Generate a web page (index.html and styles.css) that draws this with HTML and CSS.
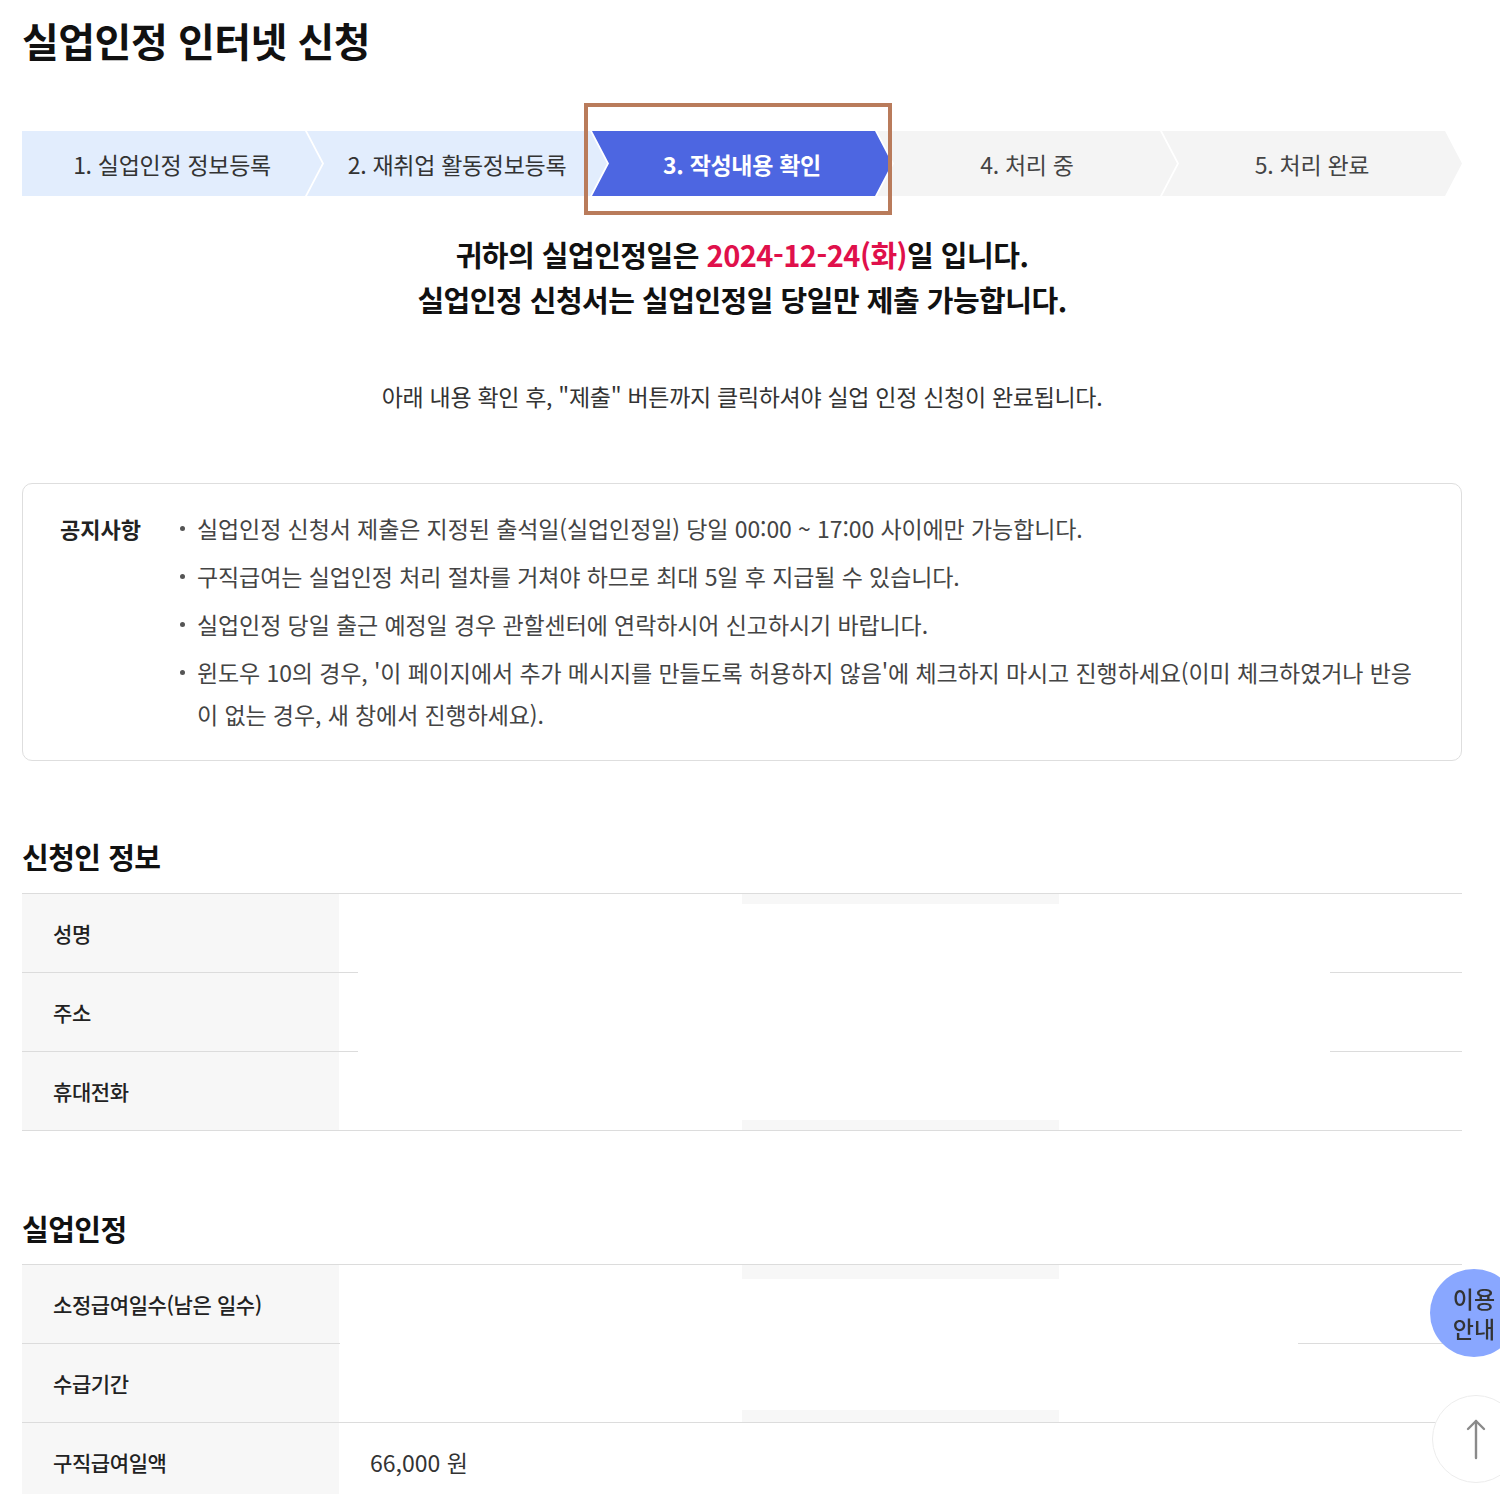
FILE: index.html
```html
<!DOCTYPE html>
<html lang="ko">
<head>
    <meta charset="utf-8">
    <title>실업인정 인터넷 신청</title>
    <link rel="stylesheet" href="styles.css">
</head>
<body>
    <div class="wrap">
        <h1 class="page-title">실업인정 인터넷 신청</h1>

        <div class="steps">
            <div class="step step-done step-first">1. 실업인정 정보등록</div>
            <div class="step step-done">2. 재취업 활동정보등록</div>
            <div class="step step-on">3. 작성내용 확인</div>
            <div class="step">4. 처리 중</div>
            <div class="step">5. 처리 완료</div>
            <div class="step-mark"></div>
        </div>

        <div class="message">
            <p>귀하의 실업인정일은 <span class="date">2024-12-24(화)</span>일 입니다.</p>
            <p>실업인정 신청서는 실업인정일 당일만 제출 가능합니다.</p>
        </div>

        <p class="guide">아래 내용 확인 후, "제출" 버튼까지 클릭하셔야 실업 인정 신청이 완료됩니다.</p>

        <div class="notice">
            <strong class="notice-title">공지사항</strong>
            <ul class="notice-list">
                <li>실업인정 신청서 제출은 지정된 출석일(실업인정일) 당일 00:00 ~ 17:00 사이에만 가능합니다.</li>
                <li>구직급여는 실업인정 처리 절차를 거쳐야 하므로 최대 5일 후 지급될 수 있습니다.</li>
                <li>실업인정 당일 출근 예정일 경우 관할센터에 연락하시어 신고하시기 바랍니다.</li>
                <li>윈도우 10의 경우, '이 페이지에서 추가 메시지를 만들도록 허용하지 않음'에 체크하지 마시고 진행하세요(이미 체크하였거나 반응<br>이 없는 경우, 새 창에서 진행하세요).</li>
            </ul>
        </div>

        <h2 class="sec-title">신청인 정보</h2>
        <div class="info-table">
            <div class="row"><div class="th">성명</div><div class="td"></div></div>
            <div class="row"><div class="th">주소</div><div class="td"></div></div>
            <div class="row"><div class="th">휴대전화</div><div class="td"></div></div>
            <div class="mask mask-a"><span class="mask-top"></span><span class="mask-bottom"></span></div>
        </div>

        <h2 class="sec-title sec-second">실업인정</h2>
        <div class="info-table">
            <div class="row"><div class="th">소정급여일수(남은 일수)</div><div class="td"></div></div>
            <div class="row"><div class="th">수급기간</div><div class="td"></div></div>
            <div class="row"><div class="th">구직급여일액</div><div class="td">66,000 원</div></div>
            <div class="mask mask-b"><span class="mask-top"></span><span class="mask-bottom"></span></div>
        </div>
    </div>

    <a class="float-btn btn-guide" href="#">이용<br>안내</a>
    <a class="float-btn btn-top" href="#">
        <svg width="24" height="42" viewBox="0 0 24 42" fill="none" stroke="#8a8a8a" stroke-width="2.4" stroke-linecap="round" stroke-linejoin="round">
            <path d="M12 3 L12 40"/>
            <path d="M4 11 L12 3 L20 11"/>
        </svg>
    </a>
</body>
</html>
```

FILE: styles.css
```css
body {
    margin: 0;
    background-color: #fff;
    color: #111;
    font-family: "Noto Sans CJK KR", "Noto Sans", sans-serif;
}
.wrap {
    width: 1440px;
    margin-left: 22px;
    padding-bottom: 40px;
}
.page-title {
    margin: 0;
    padding-top: 16px;
    font-size: 40px;
    line-height: 48px;
    font-weight: 700;
    letter-spacing: -0.5px;
}

/* 진행 단계 */
.steps {
    position: relative;
    display: flex;
    margin-top: 67px;
    height: 65px;
}
.step {
    flex: 0 0 300px;
    margin-left: -15px;
    display: flex;
    align-items: center;
    justify-content: center;
    background-color: #f4f4f4;
    color: #444;
    font-size: 23px;
    letter-spacing: -0.3px;
    clip-path: polygon(0 0, calc(100% - 17px) 0, 100% 50%, calc(100% - 17px) 100%, 0 100%, 17px 50%);
}
.step-first {
    margin-left: 0;
    clip-path: polygon(0 0, calc(100% - 17px) 0, 100% 50%, calc(100% - 17px) 100%, 0 100%);
}
.step-done {
    background-color: #e2edfd;
    color: #333;
}
.step-on {
    background-color: #4d66e1;
    color: #fff;
    font-weight: 700;
}
.step-mark {
    position: absolute;
    left: 562px;
    top: -28px;
    width: 300px;
    height: 104px;
    border: 4px solid #b97b5b;
}

/* 안내 문구 */
.message {
    margin-top: 36px;
    text-align: center;
    font-size: 29px;
    line-height: 45px;
    font-weight: 700;
    letter-spacing: -0.5px;
}
.message p {
    margin: 0;
}
.date {
    color: #e0104b;
}
.guide {
    margin: 59px 0 0;
    text-align: center;
    font-size: 23px;
    line-height: 30px;
    color: #333;
    letter-spacing: -0.3px;
}

/* 공지사항 */
.notice {
    display: flex;
    margin-top: 72px;
    padding: 23px 20px 25px 37px;
    border: 1px solid #dedede;
    border-radius: 10px;
}
.notice-title {
    flex: 0 0 120px;
    font-size: 22px;
    line-height: 42px;
    color: #222;
}
.notice-list {
    flex: 1;
    margin: 0;
    padding: 0;
    list-style: none;
}
.notice-list li {
    position: relative;
    padding-left: 17px;
    margin-bottom: 6px;
    font-size: 23px;
    line-height: 42px;
    color: #444;
    letter-spacing: -0.1px;
}
.notice-list li:last-child {
    margin-bottom: 0;
}
.notice-list li::before {
    content: "";
    position: absolute;
    left: 0;
    top: 19px;
    width: 5px;
    height: 5px;
    border-radius: 50%;
    background-color: #555;
}

/* 정보 표 */
.sec-title {
    margin: 75px 0 17px;
    font-size: 29px;
    line-height: 40px;
    font-weight: 700;
    letter-spacing: -0.5px;
}
.sec-second {
    margin-top: 77px;
    margin-bottom: 16px;
}
.info-table {
    position: relative;
    border-top: 1px solid #dcdcdc;
}
.row {
    display: grid;
    grid-template-columns: 317px 1fr;
    height: 78px;
    border-bottom: 1px solid #dcdcdc;
}
.th {
    display: flex;
    align-items: center;
    padding-left: 31px;
    background-color: #f7f7f7;
    font-size: 21px;
    font-weight: 500;
    color: #222;
    letter-spacing: -0.4px;
}
.td {
    display: flex;
    align-items: center;
    padding-left: 31px;
    font-size: 23px;
    color: #333;
}
.mask {
    position: absolute;
    top: 0;
    background-color: #fff;
}
.mask-a {
    left: 336px;
    width: 972px;
    height: 236px;
}
.mask-b {
    left: 318px;
    width: 958px;
    height: 157px;
}
.mask-top,
.mask-bottom {
    position: absolute;
    left: 384px;
    width: 317px;
    background-color: #f7f7f7;
}
.mask-top {
    top: 0;
    height: 10px;
}
.mask-bottom {
    bottom: 0;
    height: 10px;
}
.mask-b .mask-top {
    left: 402px;
    height: 14px;
}
.mask-b .mask-bottom {
    left: 402px;
    height: 12px;
}

/* 떠 있는 버튼 */
.float-btn {
    position: fixed;
    right: -18px;
    width: 88px;
    height: 88px;
    border-radius: 50%;
    display: flex;
    align-items: center;
    justify-content: center;
    text-decoration: none;
}
.btn-guide {
    bottom: 137px;
    background-color: #89a7ff;
    color: #333;
    font-size: 23px;
    line-height: 30px;
    font-weight: 500;
    text-align: center;
}
.btn-top {
    bottom: 11px;
    right: -20px;
    background-color: #fff;
    border: 1px solid #ececec;
    box-sizing: border-box;
}
```
